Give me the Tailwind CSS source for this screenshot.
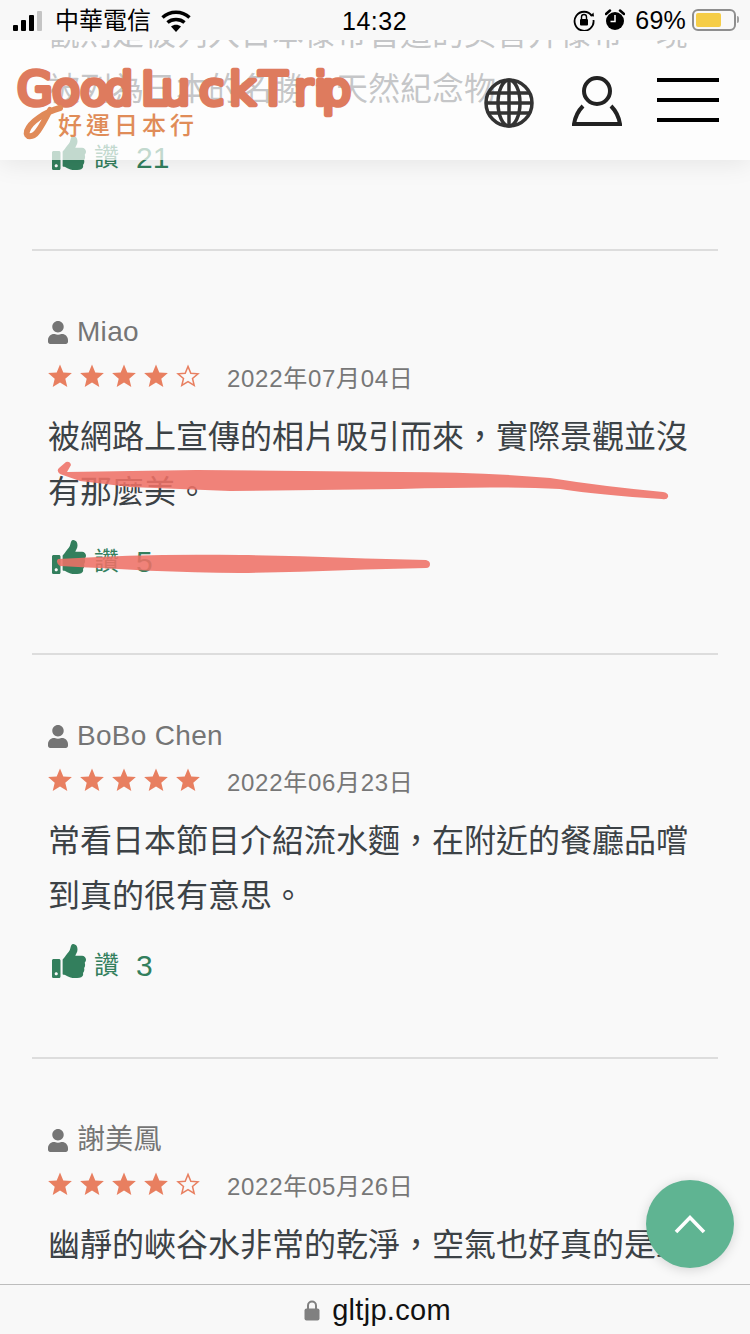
<!DOCTYPE html>
<html lang="zh-Hant">
<head>
    <meta charset="UTF-8">
    <title>GoodLuckTrip</title>
    <script src="https://cdn.jsdelivr.net/npm/@tailwindcss/browser@4"></script>
</head>
<body class="bg-[#f9f9f9]">
<svg class="hidden">
    <symbol id="thumb" viewBox="0 0 512 512"><path d="M104 224H24c-13.255 0-24 10.745-24 24v240c0 13.255 10.745 24 24 24h80c13.255 0 24-10.745 24-24V248c0-13.255-10.745-24-24-24zM64 472c-13.255 0-24-10.745-24-24s10.745-24 24-24 24 10.745 24 24-10.745 24-24 24zM384 81.452c0 42.416-25.97 66.208-33.277 94.548h101.723c33.397 0 59.397 27.746 59.553 58.098.084 17.938-7.546 37.249-19.439 49.197l-.11.11c9.836 23.337 8.237 56.037-9.308 79.469 8.681 25.895-.069 57.704-16.382 74.757 4.298 17.598 2.244 32.575-6.148 44.632C440.202 511.587 389.616 512 346.839 512l-2.845-.001c-48.287-.017-87.806-17.598-119.56-31.725-15.957-7.099-36.821-15.887-52.651-16.178-6.54-.12-11.783-5.457-11.783-11.998v-213.77c0-3.2 1.282-6.271 3.558-8.521 39.614-39.144 56.648-80.587 89.117-113.111 14.804-14.832 20.188-37.236 25.393-58.902C282.515 39.293 291.817 0 312 0c24 0 72 8 72 81.452z"/></symbol>
    <symbol id="user" viewBox="0 0 448 512"><path d="M224 256c70.7 0 128-57.3 128-128S294.7 0 224 0 96 57.3 96 128s57.3 128 128 128zm89.6 32h-16.7c-22.2 10.2-46.9 16-72.9 16s-50.6-5.8-72.9-16h-16.7C60.2 288 0 348.2 0 422.4V464c0 26.5 21.5 48 48 48h352c26.5 0 48-21.5 48-48v-41.6c0-74.2-60.2-134.4-134.4-134.4z"/></symbol>
    <symbol id="star" viewBox="0 0 24 24"><path fill="#e87f60" d="M12 .5L15.300 8.500L23.900 9.100L17.300 14.700L19.300 23.100L12 18.600L4.700 23.100L6.700 14.700L.1 9.100L8.700 8.500Z"/></symbol>
    <symbol id="star-o" viewBox="0 0 24 24"><path fill="none" stroke="#e87f60" stroke-width="1.500" d="M12 2.400L14.800 9.200L22 9.800L16.500 14.500L18.200 21.500L12 17.700L5.800 21.500L7.500 14.500L2 9.800L9.200 9.200Z"/></symbol>
</svg>

<div class="relative w-[750px] h-[1334px] overflow-hidden bg-[#f9f9f9] font-['Liberation_Sans','Noto_Sans_CJK_TC',sans-serif]">

    <!-- reviews, scrolled so the first one is cut off by the header -->
    <main class="mt-[11px] px-[32px]">
        <section class="h-[240px] border-b-2 border-[#dddddd] pt-[1px]">
            <p class="-mt-[5px] pl-[16px] w-[657px] text-[32px] leading-[55px] text-[#3c4246]">觀則是被列入日本傣帝皆造的美音并傣帝一境被列為日本的名勝、天然紀念物</p>
            <div class="flex items-center h-[34px] mt-[19px] pl-[20px] text-[#337f5d]">
                <svg class="w-[34px] h-[34px] fill-current"><use href="#thumb"/></svg>
                <span class="ml-[8px] mt-[8px] text-[25px] leading-[34px]">讚</span>
                <span class="ml-[17px] mt-[10px] text-[30px] leading-[34px]">21</span>
            </div>
        </section>

        <section class="h-[404px] border-b-2 border-[#dddddd] pt-[66px]">
            <div class="flex items-center h-[30px] pl-[16px] text-[#757575]">
                <svg class="w-[20px] h-[23px] fill-current"><use href="#user"/></svg>
                <span class="ml-[9px] text-[28px] tracking-[0.3px]">Miao</span>
            </div>
            <div class="flex items-center h-[30px] mt-[15px] pl-[16px]">
                <div class="flex gap-[8px] mb-[2px]">
                    <svg class="w-[24px] h-[24px]"><use href="#star"/></svg>
                    <svg class="w-[24px] h-[24px]"><use href="#star"/></svg>
                    <svg class="w-[24px] h-[24px]"><use href="#star"/></svg>
                    <svg class="w-[24px] h-[24px]"><use href="#star"/></svg>
                    <svg class="w-[24px] h-[24px]"><use href="#star-o"/></svg>
                </div>
                <span class="ml-[27px] mt-[4px] text-[24px] tracking-[0.7px] text-[#777777]">2022年07月04日</span>
            </div>
            <p class="mt-[18px] pl-[16px] w-[657px] text-[32px] leading-[55px] text-[#3c4246]">被網路上宣傳的相片吸引而來，實際景觀並沒有那麼美。</p>
            <div class="flex items-center h-[34px] mt-[20px] pl-[20px] text-[#337f5d]">
                <svg class="w-[34px] h-[34px] fill-current"><use href="#thumb"/></svg>
                <span class="ml-[8px] mt-[8px] text-[25px] leading-[34px]">讚</span>
                <span class="ml-[17px] mt-[10px] text-[30px] leading-[34px]">5</span>
            </div>
        </section>

        <section class="h-[404px] border-b-2 border-[#dddddd] pt-[66px]">
            <div class="flex items-center h-[30px] pl-[16px] text-[#757575]">
                <svg class="w-[20px] h-[23px] fill-current"><use href="#user"/></svg>
                <span class="ml-[9px] text-[28px] tracking-[0.3px]">BoBo Chen</span>
            </div>
            <div class="flex items-center h-[30px] mt-[15px] pl-[16px]">
                <div class="flex gap-[8px] mb-[2px]">
                    <svg class="w-[24px] h-[24px]"><use href="#star"/></svg>
                    <svg class="w-[24px] h-[24px]"><use href="#star"/></svg>
                    <svg class="w-[24px] h-[24px]"><use href="#star"/></svg>
                    <svg class="w-[24px] h-[24px]"><use href="#star"/></svg>
                    <svg class="w-[24px] h-[24px]"><use href="#star"/></svg>
                </div>
                <span class="ml-[27px] mt-[4px] text-[24px] tracking-[0.7px] text-[#777777]">2022年06月23日</span>
            </div>
            <p class="mt-[18px] pl-[16px] w-[657px] text-[32px] leading-[55px] text-[#3c4246]">常看日本節目介紹流水麵，在附近的餐廳品嚐到真的很有意思。</p>
            <div class="flex items-center h-[34px] mt-[20px] pl-[20px] text-[#337f5d]">
                <svg class="w-[34px] h-[34px] fill-current"><use href="#thumb"/></svg>
                <span class="ml-[8px] mt-[8px] text-[25px] leading-[34px]">讚</span>
                <span class="ml-[17px] mt-[10px] text-[30px] leading-[34px]">3</span>
            </div>
        </section>

        <section class="pt-[66px]">
            <div class="flex items-center h-[30px] pl-[16px] text-[#757575]">
                <svg class="w-[20px] h-[23px] fill-current"><use href="#user"/></svg>
                <span class="ml-[9px] text-[28px] tracking-[0.3px]">謝美鳳</span>
            </div>
            <div class="flex items-center h-[30px] mt-[15px] pl-[16px]">
                <div class="flex gap-[8px] mb-[2px]">
                    <svg class="w-[24px] h-[24px]"><use href="#star"/></svg>
                    <svg class="w-[24px] h-[24px]"><use href="#star"/></svg>
                    <svg class="w-[24px] h-[24px]"><use href="#star"/></svg>
                    <svg class="w-[24px] h-[24px]"><use href="#star"/></svg>
                    <svg class="w-[24px] h-[24px]"><use href="#star-o"/></svg>
                </div>
                <span class="ml-[27px] mt-[4px] text-[24px] tracking-[0.7px] text-[#777777]">2022年05月26日</span>
            </div>
            <p class="mt-[18px] pl-[16px] w-[657px] text-[32px] leading-[55px] text-[#3c4246]">幽靜的峽谷水非常的乾淨，空氣也好真的是最</p>
        </section>
    </main>

    <!-- red scribbles drawn over the screenshot -->
    <svg class="absolute left-0 top-0 pointer-events-none" width="750" height="600" viewBox="0 0 750 600">
        <path fill="#ee7166" fill-opacity="0.88" d="M66 462 Q70 461 71 465 L67 472 L197 470 L400 472 Q480 472 550 478 Q600 486 663 492 Q669 493 668 497 Q667 500 662 499 Q600 495 560 489 Q500 486 400 489 L230 491 L130 487 L80 481 L60 474 Q56 471 59 468 Z"/>
        <path fill="#ee7166" fill-opacity="0.88" d="M58 559 C120 555 180 554 240 555 C310 556 370 559 426 560 Q430 561 430 564 Q430 568 426 568 C370 569 310 572 240 573 C180 573 120 569 60 566 Q55 562 58 559 Z"/>
    </svg>

    <!-- site header -->
    <header class="absolute left-0 top-[40px] w-[750px] h-[120px] bg-white/70 shadow-[0_4px_24px_rgba(0,0,0,0.08)]">
        <svg class="absolute left-0 top-0" width="370" height="110" viewBox="0 0 370 110">
            <text x="17 52 80 104 141 161 199 229 259 294 314 322" y="65" font-family="'DejaVu Sans'" font-size="46" fill="#de7b5e" stroke="#de7b5e" stroke-width="4.500" stroke-linejoin="round">GoodLuckTrip</text>
            <path d="M60 68 C45 72 30 82 27 91 C25 98 33 98 38 91 C43 84 46 78 50 70" fill="none" stroke="#e08a58" stroke-width="6" stroke-linecap="round"/>
        </svg>
        <span class="absolute left-[58px] top-[71px] text-[24px] leading-[30px] tracking-[4px] font-medium text-[#e08c58]">好運日本行</span>

        <div class="absolute right-[31px] top-[38px] flex items-start">
            <svg class="w-[50px] h-[50px] fill-none stroke-[#333333] mr-[38px]" viewBox="0 0 50 50" stroke-width="3.500">
                <circle cx="25" cy="25" r="23"/>
                <ellipse cx="25" cy="25" rx="11" ry="23"/>
                <path d="M25 2v46M4 15h42M2 25h46M4 35h42"/>
            </svg>
            <svg class="w-[50px] h-[50px] -mt-[2px] fill-none stroke-[#222222] mr-[35px]" viewBox="0 0 50 50" stroke-width="4">
                <circle cx="25" cy="15" r="13"/>
                <path d="M11 30 C6 35 3 42 2 48 H48 C47 42 44 35 39 30"/>
            </svg>
            <div class="flex flex-col gap-[16px] w-[62px]">
                <div class="h-[4px] bg-black"></div>
                <div class="h-[4px] bg-black"></div>
                <div class="h-[4px] bg-black"></div>
            </div>
        </div>
    </header>

    <!-- ios status bar -->
    <div class="absolute left-0 top-0 w-[750px] h-[40px] bg-[#f8f8f8] flex items-center text-black pt-[2px]">
        <div class="flex items-end gap-[3px] ml-[13px] h-[20px]">
            <div class="w-[5px] h-[6px] rounded-[1px] bg-black"></div>
            <div class="w-[5px] h-[11px] rounded-[1px] bg-black"></div>
            <div class="w-[5px] h-[16px] rounded-[1px] bg-black"></div>
            <div class="w-[5px] h-[20px] rounded-[1px] bg-[#c4c4c4]"></div>
        </div>
        <span class="ml-[13px] text-[24px] leading-none">中華電信</span>
        <svg class="ml-[10px] w-[30px] h-[22px]" viewBox="0 0 30 22" fill="none" stroke="black" stroke-width="3.400">
            <path d="M1.500 7.500 C9 0.500 21 0.500 28.500 7.500"/>
            <path d="M6.500 12.500 C11 8.500 19 8.500 23.500 12.500"/>
            <path d="M15 22 L10 16.500 C13 14.200 17 14.200 20 16.500 Z" fill="black" stroke="none"/>
        </svg>
        <span class="absolute left-[342px] top-[7px] text-[25px] leading-[28px] font-medium tracking-[0.5px]">14:32</span>
        <div class="absolute right-[14px] top-0 h-[40px] flex items-center">
            <svg class="w-[22px] h-[22px] mr-[10px]" viewBox="0 0 22 22" fill="none" stroke="black" stroke-width="1.800">
                <path d="M19 7 A9.500 9.500 0 1 0 20.500 11"/>
                <path d="M17 7 L21 7.500 L20.500 3.500" fill="black" stroke="none"/>
                <rect x="7" y="10" width="8" height="6.500" rx="1" fill="black" stroke="none"/>
                <path d="M8.500 10 V8 A2.500 2.500 0 0 1 13.500 8 V10" stroke-width="1.400"/>
            </svg>
            <svg class="w-[20px] h-[22px] mr-[10px]" viewBox="0 0 20 22">
                <circle cx="10" cy="12" r="9" fill="black"/>
                <path d="M1 5 L5 1.500 M19 5 L15 1.500" stroke="black" stroke-width="2.500" stroke-linecap="round"/>
                <path d="M10 6 V12.500 H5.500" fill="none" stroke="white" stroke-width="1.500"/>
            </svg>
            <span class="text-[25px] leading-none tracking-[0.2px]">69%</span>
            <div class="relative ml-[6px] w-[44px] h-[22px] rounded-[6px] border-2 border-[#8e8e8e] p-[2px] flex">
                <div class="w-[25px] h-full rounded-[2px] bg-[#f5cd47]"></div>
                <div class="absolute -right-[5px] top-[5px] w-[2px] h-[7px] rounded-r bg-[#a0a0a0]"></div>
            </div>
        </div>
    </div>

    <!-- back to top -->
    <button class="absolute left-[646px] top-[1180px] w-[88px] h-[88px] rounded-full bg-[#5fb492] shadow-[0_2px_12px_rgba(0,0,0,0.15)] flex items-center justify-center">
        <svg class="w-[32px] h-[20px]" viewBox="0 0 32 20" fill="none" stroke="white" stroke-width="3.600">
            <path d="M2 18 L16 3.500 L30 18"/>
        </svg>
    </button>

    <!-- safari url bar -->
    <div class="absolute left-0 top-[1284px] w-[750px] h-[50px] pl-[5px] bg-[#f8f8f8] border-t border-[#bdbdbd] flex items-center justify-center">
        <svg class="w-[16px] h-[22px] mr-[12px] fill-[#808080]" viewBox="0 0 16 22">
            <path d="M3 10 V6.500 A5 5 0 0 1 13 6.500 V10 H11 V6.500 A3 3 0 0 0 5 6.500 V10 Z"/>
            <rect x="0.500" y="9.500" width="15" height="12" rx="2"/>
        </svg>
        <span class="mt-[2px] text-[29px] leading-none tracking-[0.3px] text-[#111111]">gltjp.com</span>
    </div>
</div>
</body>
</html>
